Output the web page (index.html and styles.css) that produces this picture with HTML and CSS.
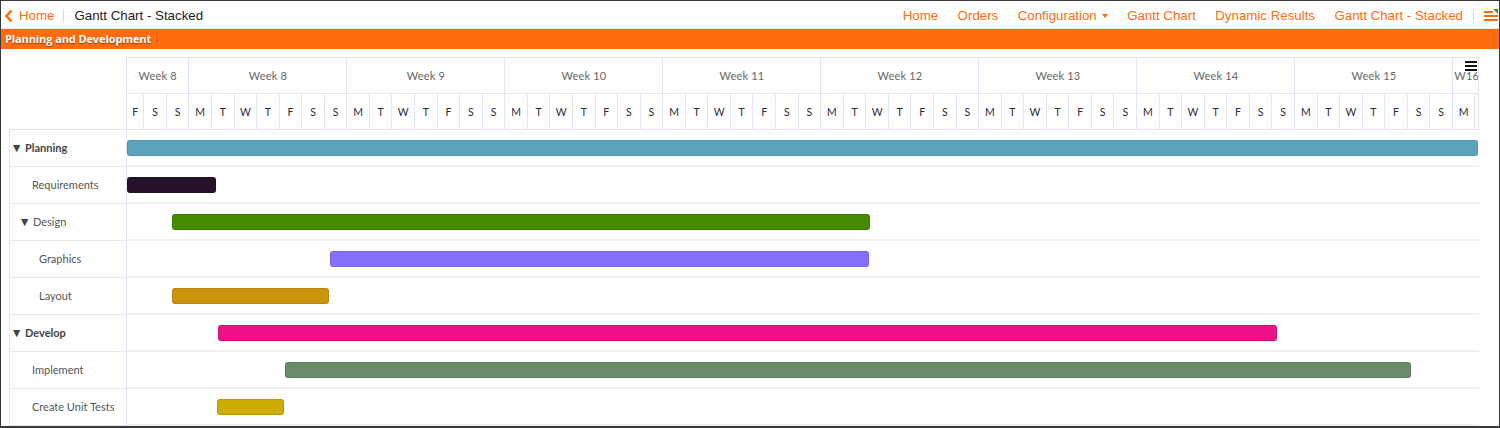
FILE: index.html
```html
<!DOCTYPE html>
<html>
<head>
<meta charset="utf-8">
<link rel="stylesheet" href="styles.css">
</head>
<body>
<div class="frame">
  <nav class="topbar">
    <a class="back"><svg class="chev" width="10" height="14" viewBox="0 0 10 14"><path d="M7.5 1.5 L2.5 7 L7.5 12.5" fill="none" stroke="#ff6c10" stroke-width="2.6"/></svg>Home</a>
    <span class="sep"></span>
    <span class="title">Gantt Chart - Stacked</span>
    <ul class="menu">
      <li>Home</li>
      <li>Orders</li>
      <li>Configuration <span class="caret"></span></li>
      <li>Gantt Chart</li>
      <li>Dynamic Results</li>
      <li>Gantt Chart - Stacked</li>
    </ul>
    <span class="sep sep-right"></span>
    <svg class="flag" width="14" height="14" viewBox="0 0 14 14">
      <rect x="0" y="2" width="9" height="2" fill="#ff6c10"/>
      <rect x="0" y="6" width="14" height="2" fill="#ff6c10"/>
      <rect x="0" y="10" width="14" height="2" fill="#ff6c10"/>
      <polygon points="9,0 14,0 14,5" fill="#3a9a3a"/>
    </svg>
  </nav>
  <div class="banner">Planning and Development</div>

  <div class="gantt">
    <div class="corner"></div>
    <div class="timeline">
      <div class="weeks">
        <div class="w first">Week 8</div>
        <div class="w">Week 8</div>
        <div class="w">Week 9</div>
        <div class="w">Week 10</div>
        <div class="w">Week 11</div>
        <div class="w">Week 12</div>
        <div class="w">Week 13</div>
        <div class="w">Week 14</div>
        <div class="w">Week 15</div>
        <div class="w last">W16</div>
      </div>
      <div class="days">
        <div class="d first">F</div><div class="d">S</div><div class="d">S</div>
        <div class="d">M</div><div class="d">T</div><div class="d">W</div><div class="d">T</div><div class="d">F</div><div class="d">S</div><div class="d">S</div>
        <div class="d">M</div><div class="d">T</div><div class="d">W</div><div class="d">T</div><div class="d">F</div><div class="d">S</div><div class="d">S</div>
        <div class="d">M</div><div class="d">T</div><div class="d">W</div><div class="d">T</div><div class="d">F</div><div class="d">S</div><div class="d">S</div>
        <div class="d">M</div><div class="d">T</div><div class="d">W</div><div class="d">T</div><div class="d">F</div><div class="d">S</div><div class="d">S</div>
        <div class="d">M</div><div class="d">T</div><div class="d">W</div><div class="d">T</div><div class="d">F</div><div class="d">S</div><div class="d">S</div>
        <div class="d">M</div><div class="d">T</div><div class="d">W</div><div class="d">T</div><div class="d">F</div><div class="d">S</div><div class="d">S</div>
        <div class="d">M</div><div class="d">T</div><div class="d">W</div><div class="d">T</div><div class="d">F</div><div class="d">S</div><div class="d">S</div>
        <div class="d">M</div><div class="d">T</div><div class="d">W</div><div class="d">T</div><div class="d">F</div><div class="d">S</div><div class="d">S</div>
        <div class="d">M</div><div class="d tail"></div>
      </div>
      <span class="hamburger"><i></i><i></i><i></i></span>
    </div>

    <div class="labels">
      <div class="lrow group"><span class="tri">▼</span>Planning</div>
      <div class="lrow lvl1">Requirements</div>
      <div class="lrow lvl1 sub"><span class="tri">▼</span>Design</div>
      <div class="lrow lvl2">Graphics</div>
      <div class="lrow lvl2">Layout</div>
      <div class="lrow group"><span class="tri">▼</span>Develop</div>
      <div class="lrow lvl1">Implement</div>
      <div class="lrow lvl1">Create Unit Tests</div>
    </div>

    <div class="chart">
      <div class="crow"><div class="bar" style="margin-left:0;width:1351px;background:#5ba4bb"></div></div>
      <div class="crow"><div class="bar" style="margin-left:0;width:89px;background:#26122a"></div></div>
      <div class="crow"><div class="bar" style="margin-left:45px;width:698px;background:#458b00"></div></div>
      <div class="crow"><div class="bar" style="margin-left:203px;width:539px;background:#8470ff"></div></div>
      <div class="crow"><div class="bar" style="margin-left:45px;width:157px;background:#cd950c"></div></div>
      <div class="crow"><div class="bar" style="margin-left:91px;width:1059px;background:#ee1289"></div></div>
      <div class="crow"><div class="bar" style="margin-left:158px;width:1126px;background:#698b69"></div></div>
      <div class="crow"><div class="bar" style="margin-left:90px;width:67px;background:#cdad00"></div></div>
    </div>
  </div>
</div>
</body>
</html>
```

FILE: styles.css
```css
* { box-sizing: border-box; }

html, body {
  margin: 0;
  padding: 0;
  background: #fff;
}

.frame {
  width: 1500px;
  height: 428px;
  border: 1px solid #3a3a3a;
  border-bottom-width: 2px;
  overflow: hidden;
  background: #fff;
}

/* ---------- top bar ---------- */
.topbar {
  height: 28px;
  padding-top: 2px;
  display: flex;
  align-items: center;
  font-family: "Liberation Sans", Arial, sans-serif;
  font-size: 13.3px;
  border-bottom: 1px solid #e6e6e6;
  padding-left: 3px;
}

.back {
  display: flex;
  align-items: center;
  color: #ff6c10;
  gap: 5px;
}

.chev { display: block; }

.sep {
  width: 1px;
  height: 14px;
  background: #dcdcdc;
  margin: 0 10px 0 9px;
}

.title { color: #222; }

.menu {
  list-style: none;
  margin: 0 0 0 auto;
  padding: 0;
  display: flex;
  gap: 19.4px;
  color: #ff6c10;
}

.menu li {
  display: flex;
  align-items: center;
  white-space: nowrap;
}

.caret {
  display: inline-block;
  width: 0;
  height: 0;
  margin-left: 5px;
  border-left: 3.5px solid transparent;
  border-right: 3.5px solid transparent;
  border-top: 4px solid #ff6c10;
}

.sep-right { margin: 0 10px 0 10px; }

.flag {
  display: block;
  margin-right: 1px;
}

/* ---------- banner ---------- */
.banner {
  height: 20px;
  background: #ff6c10;
  color: #fff;
  font-family: "Open Sans", sans-serif;
  font-weight: 700;
  font-size: 11px;
  line-height: 20px;
  padding-left: 4px;
  letter-spacing: -0.1px;
  text-shadow: 0 1px 1px rgba(0,0,0,0.45);
}

/* ---------- gantt ---------- */
.gantt {
  margin: 8px 0 0 8px;
  display: grid;
  grid-template-columns: 117px 1353px;
  grid-template-rows: 72px auto;
  font-family: Lato, "Open Sans", sans-serif;
}

.timeline {
  position: relative;
  border-top: 1px solid #dfe5f2;
  border-right: 1px solid #dfe5f2;
}

.weeks, .days {
  display: flex;
}

.weeks {
  height: 36px;
  border-bottom: 1px solid #dfe5f2;
}

.days { height: 35px; }

.w, .d {
  flex: 0 0 auto;
  border-left: 1px solid #dfe5f2;
  display: flex;
  align-items: center;
  justify-content: center;
  overflow: hidden;
  white-space: nowrap;
}

.w {
  width: 158px;
  font-size: 11px;
  color: #666;
  letter-spacing: 0.2px;
}

.w.first { width: 62.44px; }
.w.last { flex: 1 1 auto; width: auto; padding-left: 2px; }

.d {
  width: 22.571px;
  font-size: 10.5px;
  color: #2b2b3a;
}

.d.first { width: 17.3px; }
.d.tail { flex: 1 1 auto; width: auto; }

.hamburger {
  position: absolute;
  top: 3px;
  right: 1px;
  width: 12px;
  display: flex;
  flex-direction: column;
  gap: 2px;
}

.hamburger i {
  display: block;
  height: 2px;
  background: #111;
}

.labels {
  border: 1px solid #dfe5f2;
  border-right: none;
}

.lrow {
  height: 37px;
  border-bottom: 1px solid #e4e9f4;
  display: flex;
  align-items: center;
  font-size: 11px;
  color: #555;
  padding-left: 22px;
  padding-bottom: 1px;
  white-space: nowrap;
}

.lrow:last-child { border-bottom: none; height: 36px; }

.lrow.group {
  padding-left: 3px;
  font-weight: 700;
  color: #444;
}

.lrow.sub { padding-left: 11px; }
.lrow.lvl2 { padding-left: 29px; }

.tri {
  font-family: "DejaVu Sans", sans-serif;
  font-size: 9.5px;
  width: 12px;
  color: #444;
}

.chart {
  border-top: 1px solid #dfe5f2;
  border-left: 1px solid #dfe5f2;
  width: 1353px;
}

.crow {
  height: 37px;
  border-bottom: 2px solid #f0f0f0;
  display: flex;
  align-items: center;
}

.bar {
  height: 16px;
  flex: 0 0 auto;
  border-radius: 3px;
  border: 1px solid rgba(0,0,0,0.1);
}
```
